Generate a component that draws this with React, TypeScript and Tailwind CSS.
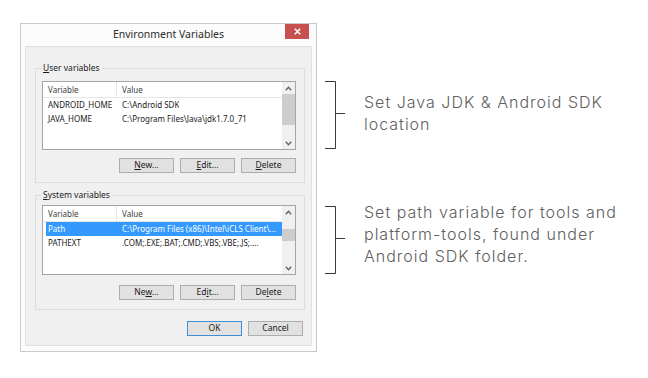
import React from "react";

const dlgFont = { fontFamily: '"Noto Sans", "Open Sans", sans-serif' };

function Btn({ children, primary = false }: { children: React.ReactNode; primary?: boolean }) {
  return (
    <div
      className={
        "w-[55px] h-[15px] flex items-center justify-center text-[8.5px] leading-none text-[#1a1a1a] bg-[#e1e1e1] border " +
        (primary ? "border-[#3c8fd9]" : "border-[#adadad]")
      }
    >
      {children}
    </div>
  );
}

function ScrollBar({ thumbTop, thumbH }: { thumbTop: number; thumbH: number }) {
  return (
    <div className="w-[13px] self-stretch bg-[#f0f0f0] flex flex-col items-stretch">
      <div className="h-[12px] flex items-center justify-center">
        <svg width="7" height="5" viewBox="0 0 7 5">
          <path d="M0.8 4.2 L3.5 1.3 L6.2 4.2" fill="none" stroke="#606060" strokeWidth="1.3" />
        </svg>
      </div>
      <div className="flex-1 flex flex-col">
        <div style={{ height: thumbTop }} />
        <div className="bg-[#cdcdcd]" style={{ height: thumbH }} />
        <div className="flex-1" />
      </div>
      <div className="h-[12px] flex items-center justify-center">
        <svg width="7" height="5" viewBox="0 0 7 5">
          <path d="M0.8 0.8 L3.5 3.7 L6.2 0.8" fill="none" stroke="#606060" strokeWidth="1.3" />
        </svg>
      </div>
    </div>
  );
}

type Row = { name: string; value: string; selected?: boolean };

function ListBox({ rows, h, thumbTop, thumbH }: { rows: Row[]; h: number; thumbTop: number; thumbH: number }) {
  return (
    <div className="w-[254px] bg-white border border-[#a5a5a5] flex" style={{ height: h }}>
      <div className="flex-1 flex flex-col">
        <div className="h-[16px] flex border-b border-[#e5e5e5] text-[8px] text-[#3c3c3c]">
          <div className="w-[74px] border-r border-[#e5e5e5] pl-[5px] flex items-center">Variable</div>
          <div className="pl-[5px] flex items-center">Value</div>
        </div>
        {rows.map((r) => (
          <div key={r.name} className="h-[14px] flex text-[8px]">
            <div
              className={
                "flex-1 flex items-center ml-[3px] " +
                (r.selected ? "bg-[#3399ff] text-white" : "text-[#1a1a1a]")
              }
            >
              <div className="w-[71px] pl-[2px] whitespace-nowrap">{r.name}</div>
              <div className="pl-[5px] whitespace-nowrap overflow-hidden">{r.value}</div>
            </div>
          </div>
        ))}
      </div>
      <ScrollBar thumbTop={thumbTop} thumbH={thumbH} />
    </div>
  );
}

function Bracket() {
  return (
    <svg width="22" height="70" viewBox="0 0 22 70" className="shrink-0">
      <path d="M0 1.5 H10.5 V68.5 H0 M10.5 33.5 H20" fill="none" stroke="#3a3a3a" strokeWidth="1" />
    </svg>
  );
}

export default function App() {
  return (
    <div className="w-[648px] h-[378px] bg-white flex items-start pl-[20px] pt-[23px] overflow-hidden" style={dlgFont}>
      {/* Dialog */}
      <div className="w-[297px] h-[329px] shrink-0 border border-[#c9c9c9] bg-[#fcfcfc] flex flex-col px-[4px] pb-[5px]">
        <div className="h-[22px] flex items-start">
          <div className="w-[27px]" />
          <div className="flex-1 h-[21px] flex items-center justify-center text-[10.5px] text-[#2b2b2b]">
            Environment Variables
          </div>
          <div className="w-[24px] h-[15px] bg-[#c75050] flex items-center justify-center mr-[3px]">
            <svg width="7" height="7" viewBox="0 0 7 7">
              <path d="M0.8 0.8 L6.2 6.2 M6.2 0.8 L0.8 6.2" stroke="white" strokeWidth="1.5" />
            </svg>
          </div>
        </div>
        <div className="flex-1 bg-[#f0f0f0] border border-[#e0e0e0] flex flex-col pl-[9px]">
          {/* User variables */}
          <fieldset className="w-[270px] mt-[15px] border border-[#dcdcdc] pl-[6px] pr-[8px] pt-[7px] pb-[9px]">
            <legend className="-ml-[1px] px-[2px] text-[8.5px] leading-[12px] text-[#1a1a1a]">
              <span className="underline">U</span>ser variables
            </legend>
            <ListBox
              h={69}
              thumbTop={0}
              thumbH={31}
              rows={[
                { name: "ANDROID_HOME", value: "C:\\Android SDK" },
                { name: "JAVA_HOME", value: "C:\\Program Files\\Java\\jdk1.7.0_71" },
              ]}
            />
            <div className="mt-[8px] flex justify-end gap-[6px]">
              <Btn><span><span className="underline">N</span>ew...</span></Btn>
              <Btn><span><span className="underline">E</span>dit...</span></Btn>
              <Btn><span><span className="underline">D</span>elete</span></Btn>
            </div>
          </fieldset>
          {/* System variables */}
          <fieldset className="w-[270px] mt-[6px] border border-[#dcdcdc] pl-[6px] pr-[8px] pt-[4px] pb-[9px]">
            <legend className="-ml-[1px] px-[2px] text-[8.5px] leading-[12px] text-[#1a1a1a]">
              <span className="underline">S</span>ystem variables
            </legend>
            <ListBox
              h={70}
              thumbTop={11}
              thumbH={12}
              rows={[
                { name: "Path", value: "C:\\Program Files (x86)\\Intel\\iCLS Client\\...", selected: true },
                { name: "PATHEXT", value: ".COM;.EXE;.BAT;.CMD;.VBS;.VBE;.JS;...." },
              ]}
            />
            <div className="mt-[10px] flex justify-end gap-[6px]">
              <Btn><span>Ne<span className="underline">w</span>...</span></Btn>
              <Btn><span>Ed<span className="underline">i</span>t...</span></Btn>
              <Btn><span>De<span className="underline">l</span>ete</span></Btn>
            </div>
          </fieldset>
          <div className="mt-[11px] flex justify-end gap-[6px] mr-[8px]">
            <Btn primary>OK</Btn>
            <Btn>Cancel</Btn>
          </div>
        </div>
      </div>

      {/* Annotations */}
      <div
        className="flex flex-col ml-[8px] mt-[57px] text-[16px] leading-[22px] text-[#606060] font-light"
        style={{ fontFamily: 'Inter, "Noto Sans", sans-serif' }}
      >
        <div className="flex items-start h-[70px]">
          <Bracket />
          <div className="ml-[17px] mt-[11px] whitespace-nowrap tracking-[1px]">
            <div>Set Java JDK &amp; Android SDK</div>
            <div>location</div>
          </div>
        </div>
        <div className="flex items-start h-[70px] mt-[55px]">
          <Bracket />
          <div className="ml-[17px] -mt-[4px] whitespace-nowrap tracking-[1px]">
            <div>Set path variable for tools and</div>
            <div>platform-tools, found under</div>
            <div>Android SDK folder.</div>
          </div>
        </div>
      </div>
    </div>
  );
}
